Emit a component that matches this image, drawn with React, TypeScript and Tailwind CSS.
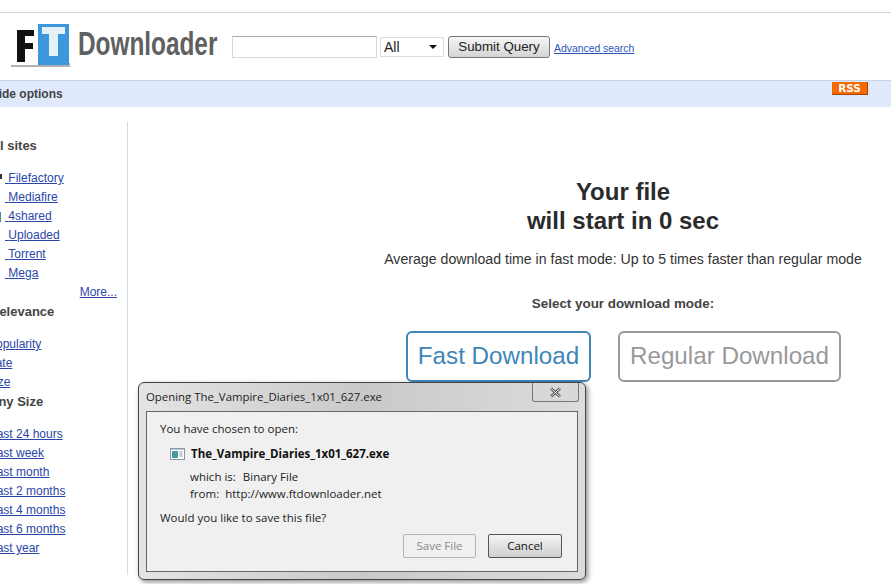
import React from 'react';

const sans = "font-['Liberation_Sans',Arial,sans-serif]";
const linkCls = 'text-[12px] leading-[19px] text-[#2a46a8] underline block whitespace-nowrap';
const headCls = 'text-[13px] leading-[16px] font-bold text-[#444] whitespace-nowrap';

const Logo = () => (
  <svg width="62" height="46" viewBox="0 0 62 46" className="shrink-0">
    <rect x="1" y="39" width="59" height="4" fill="#888" opacity="0.65" />
    <rect x="0" y="4" width="28" height="37" fill="#fff" />
    <path d="M7 6h17v6H15v7h8v6h-8v13H7z" fill="#111" />
    <rect x="28" y="0" width="31" height="41" fill="#3c97dd" />
    <path d="M32 3h23v7h-7v22h-9V10h-7z" fill="#e4f1fb" />
  </svg>
);

const Sidebar = () => (
  <aside className="w-[128px] h-[453px] shrink-0 border-r border-[#cfdde6] overflow-hidden">
    <h3 className={`${headCls} mt-[16px] -ml-[13px]`}>All sites</h3>
    <div className="mt-[15px] pl-[5px] relative">
      {['Filefactory', 'Mediafire', '4shared', 'Uploaded', 'Torrent', 'Mega'].map((s) => (
        <a key={s} className={linkCls}>
          {'\u00a0'}
          {s}
        </a>
      ))}
      <span className="absolute left-0 top-[5px] w-[2px] h-[5px] bg-[#333]" />
      <span className="absolute left-0 top-[43px] w-[1px] h-[10px] bg-[#4a8a9a]" />
    </div>
    <a className={`${linkCls} text-right pr-[10px]`}>More...</a>
    <h3 className={`${headCls} mt-[2px] -ml-[10px]`}>Relevance</h3>
    <div className="mt-[15px]">
      <a className={`${linkCls} -ml-[12px]`}>Popularity</a>
      <a className={`${linkCls} -ml-[13px]`}>Date</a>
      <a className={`${linkCls} -ml-[13px]`}>Size</a>
    </div>
    <h3 className={`${headCls} mt-[2px] -ml-[11px]`}>Any Size</h3>
    <div className="mt-[15px] -ml-[10px]">
      {['Last 24 hours', 'Last week', 'Last month', 'Last 2 months', 'Last 4 months', 'Last 6 months', 'Last year'].map((s) => (
        <a key={s} className={linkCls}>
          {s}
        </a>
      ))}
    </div>
  </aside>
);

const FileDialog = () => (
  <div className="absolute left-[138px] top-[382px] w-[448px] h-[198px] rounded-[6px] border border-[#444] bg-gradient-to-r from-[#e4e4e4] via-[#c9c9c9] to-[#dcdcdc] shadow-[2px_2px_5px_rgba(0,0,0,0.45)] font-['Open_Sans',sans-serif] text-[#222]">
    <div className="h-[28px] pl-[7px] flex items-center justify-between relative">
      <span className="text-[11.4px] whitespace-nowrap">Opening The_Vampire_Diaries_1x01_627.exe</span>
      <div className="absolute right-[6px] top-0 w-[47px] h-[19px] border border-t-0 border-[#777] rounded-b-[3px] bg-[#d8d8d8] flex items-center justify-center">
        <svg width="13" height="11" viewBox="0 0 13 11">
          <path d="M2 1.5l9 8M11 1.5l-9 8" stroke="#444" strokeWidth="2.5" />
          <path d="M2 1.5l9 8M11 1.5l-9 8" stroke="#fff" strokeWidth="1" />
        </svg>
      </div>
    </div>
    <div className="mx-[7px] h-[161px] border border-[#666] bg-[#f0f0f0] pl-[13px] pr-[15px] flex flex-col">
      <p className="text-[11.5px] leading-[16px] mt-[9px]">You have chosen to open:</p>
      <div className="flex items-center mt-[9px] ml-[10px] gap-[6px]">
        <svg width="15" height="12" viewBox="0 0 15 12" className="shrink-0">
          <rect x="0.5" y="0.5" width="14" height="11" fill="#fff" stroke="#8a98a6" />
          <rect x="2" y="3" width="6" height="7" fill="#4a9a9a" />
          <path d="M9.5 4h3M9.5 6h3M9.5 8h3" stroke="#8a98a6" />
          <rect x="1" y="1" width="13" height="1" fill="#b8cfe0" />
        </svg>
        <span className="text-[11.5px] leading-[16px] font-bold text-[#111] whitespace-nowrap">The_Vampire_Diaries_1x01_627.exe</span>
      </div>
      <div className="flex mt-[7px] ml-[30px] text-[11.5px] leading-[16px]">
        <span>which is:</span>
        <span className="ml-[7px]">Binary File</span>
      </div>
      <div className="flex mt-[1px] ml-[30px] text-[11.5px] leading-[16px]">
        <span>from:</span>
        <span className="ml-[6px]">http://www.ftdownloader.net</span>
      </div>
      <p className="text-[11.5px] leading-[16px] mt-[8px]">Would you like to save this file?</p>
      <div className="flex justify-end gap-[12px] mt-[8px]">
        <div className="w-[73px] h-[24px] border border-[#b5b5b5] rounded-[2px] bg-[#f0f0f0] text-[#888] text-[11.5px] flex items-center justify-center">Save File</div>
        <div className="w-[74px] h-[24px] border border-[#555] rounded-[2px] bg-gradient-to-b from-[#f4f4f4] to-[#cfcfcf] text-[#111] text-[11.5px] flex items-center justify-center">Cancel</div>
      </div>
    </div>
  </div>
);

const App: React.FC = () => {
  return (
    <div className={`relative w-[891px] h-[584px] overflow-hidden bg-white ${sans}`}>
      {/* Header */}
      <header className="mt-[12px] h-[68px] border-t border-[#ccd8de] pl-[10px] pt-[11px] flex items-start">
        <Logo />
        <div className="ml-[6px] mt-[1px] w-[142px] shrink-0">
          <span className="inline-block origin-left [transform:scaleX(0.738)] text-[33px] leading-[38px] font-bold text-[#606060] whitespace-nowrap">Downloader</span>
        </div>
        <input className="ml-[12px] mt-[12px] w-[145px] h-[22px] border border-[#d8d8d8] border-t-[#aaa] bg-white" />
        <div className="ml-[3px] mt-[13px] w-[64px] h-[20px] border border-[#ddd] flex items-center justify-between pl-[3px] pr-[6px] text-[14px] text-[#222]">
          <span>All</span>
          <span className="w-0 h-0 border-l-[4px] border-r-[4px] border-t-[4px] border-l-transparent border-r-transparent border-t-[#111]" />
        </div>
        <button className="ml-[4px] mt-[12px] w-[102px] h-[22px] border border-[#777] rounded-[3px] bg-gradient-to-b from-[#f6f6f6] to-[#d4d4d4] text-[13.3px] leading-[18px] text-[#222]">
          Submit Query
        </button>
        <a className="ml-[4px] mt-[18px] text-[10.4px] leading-[13px] text-[#2a56b8] underline whitespace-nowrap">Advanced search</a>
      </header>

      {/* Options bar */}
      <div className="h-[27px] border-t border-[#c6d4e8] bg-[#dfe9fb] flex items-start justify-between pr-[23px]">
        <span className="-ml-[10px] mt-[6px] text-[12px] leading-[14px] font-bold text-[#444] whitespace-nowrap">Hide options</span>
        <span className="mt-[1px] w-[36px] h-[13px] bg-[#f66a00] border-b border-r border-[#a84400] text-white text-[10.5px] leading-[12px] font-bold text-center font-['DejaVu_Sans',sans-serif]">RSS</span>
      </div>

      <div className="flex mt-[15px]">
        <Sidebar />
        {/* Main */}
        <main className="flex-1 pl-[255px] whitespace-nowrap">
          <div className="w-[480px] flex flex-col items-center">
            <h1 className="mt-[55px] text-[24px] leading-[29px] font-bold text-[#2b2b2b] text-center">
              Your file
              <br />
              will start in 0 sec
            </h1>
            <p className="mt-[15px] text-[14.15px] leading-[18px] text-[#333]">Average download time in fast mode: Up to 5 times faster than regular mode</p>
            <p className="mt-[28px] text-[13.4px] leading-[16px] font-bold text-[#444]">Select your download mode:</p>
          </div>
          <div className="flex gap-[27px] mt-[19px] ml-[23px]">
            <a className="w-[185px] h-[51px] border-2 border-[#3f86b8] rounded-[6px] text-[24.2px] leading-[45px] text-[#3f86b8] text-center">Fast Download</a>
            <a className="w-[223px] h-[51px] border-2 border-[#999] rounded-[6px] text-[24.2px] leading-[45px] text-[#999] text-center">Regular Download</a>
          </div>
        </main>
      </div>

      <FileDialog />
    </div>
  );
};

export default App;
